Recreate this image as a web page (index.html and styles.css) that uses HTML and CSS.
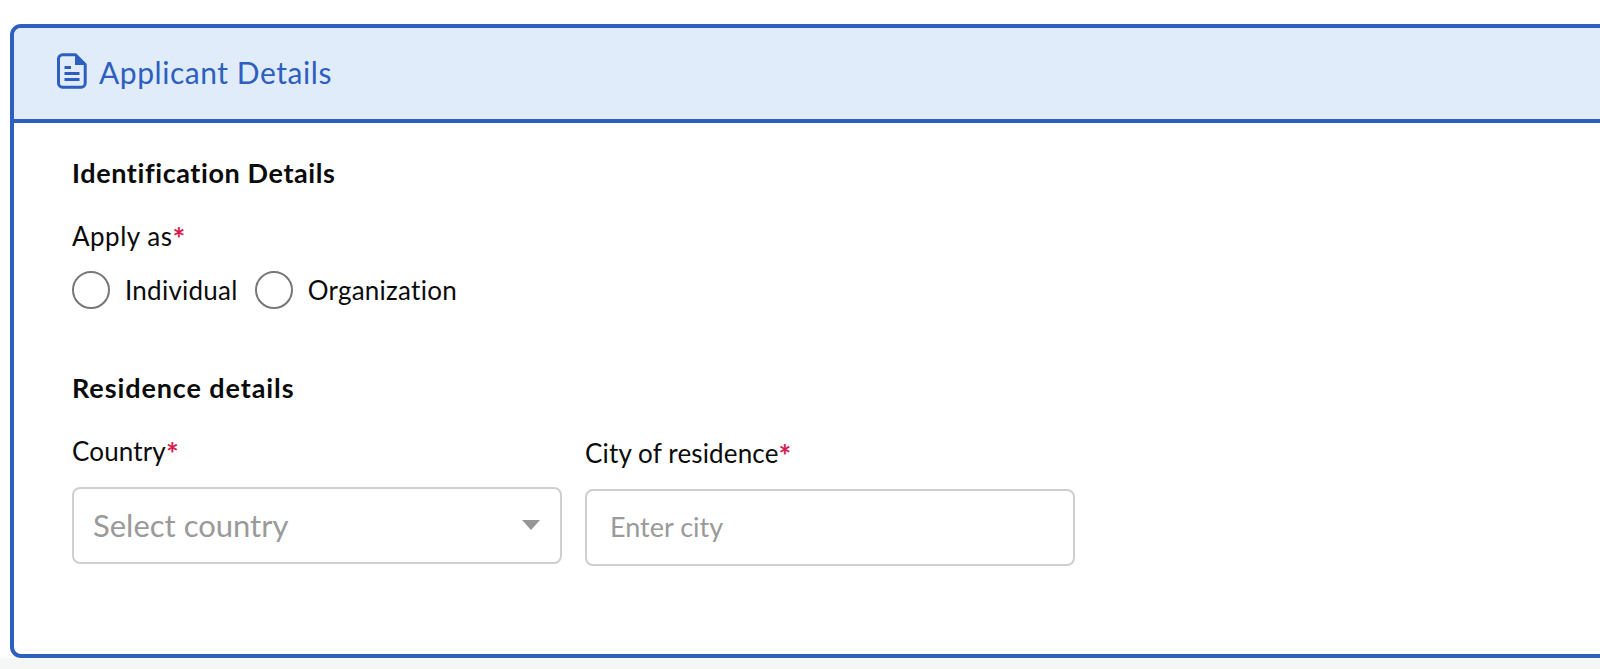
FILE: index.html
```html
<!DOCTYPE html>
<html lang="en">
<head>
<meta charset="utf-8">
<title>Applicant Details</title>
<link rel="stylesheet" href="styles.css">
</head>
<body>
<section class="card">
  <header class="card-head">
    <svg class="doc-icon" viewBox="0 0 30 36" width="30" height="36" aria-hidden="true">
      <path d="M5.5 1.8H18.5L28.2 11.5V30.2a4 4 0 0 1-4 4H5.5a4 4 0 0 1-4-4V5.8a4 4 0 0 1 4-4Z" fill="none" stroke="currentColor" stroke-width="3" stroke-linejoin="round"/>
      <path d="M18 2V12H28Z" fill="currentColor"/>
      <path d="M7.5 14.5H14M7.5 20.5H22.5M7.5 26.5H22.5" fill="none" stroke="currentColor" stroke-width="2.8"/>
    </svg>
    <h1 class="card-title">Applicant Details</h1>
  </header>
  <div class="card-body">
    <h2 class="section-title">Identification Details</h2>
    <p class="label apply-label">Apply as<span class="req">*</span></p>
    <div class="radio-row">
      <label class="radio"><span class="radio-dot"></span>Individual</label>
      <label class="radio"><span class="radio-dot"></span>Organization</label>
    </div>
    <h2 class="section-title residence">Residence details</h2>
    <div class="fields">
      <div class="field">
        <p class="label">Country<span class="req">*</span></p>
        <div class="select">
          <span>Select country</span>
          <span class="caret"></span>
        </div>
      </div>
      <div class="field field-city">
        <p class="label">City of residence<span class="req">*</span></p>
        <input class="text-input" type="text" placeholder="Enter city">
      </div>
    </div>
  </div>
</section>
</body>
</html>
```
FILE: styles.css
```css
* { box-sizing: border-box; }
html, body { margin: 0; height: 669px; overflow: hidden; }
body {
  background: linear-gradient(#fff 0, #fff 655px, #f5f7f7 660px);
  padding: 24px 0 0 10px;
  font-family: "Lato", "Open Sans", sans-serif;
  font-variant-ligatures: none;
  color: #0b0b0b;
}
.card {
  width: 1640px;
  height: 634px;
  background: #fff;
  border: 4px solid #2d5fbe;
  border-radius: 11px;
  overflow: hidden;
}
.card-head {
  height: 95px;
  background: #e0ecf9;
  border-bottom: 4px solid #2d5fbe;
  display: flex;
  align-items: center;
  padding: 0 0 3px 43px;
  color: #2d5fbe;
  gap: 12px;
}
.doc-icon { flex: none; margin-top: -2px; }
.card-title { margin: 0; font-size: 30px; font-weight: 400; letter-spacing: .55px; }
.card-body { padding: 34px 0 0 58px; }
.section-title { margin: 0; font-size: 27px; line-height: 32px; font-weight: 700; letter-spacing: .6px; }
.label { margin: 0; font-size: 26px; line-height: 32px; font-weight: 400; letter-spacing: .15px; }
.req { color: #d81b4f; font-size: 30px; font-weight: 700; line-height: 0; vertical-align: -4px; }
.apply-label { margin-top: 31px; letter-spacing: .5px; }
.radio-row { display: flex; gap: 17px; margin-top: 19px; }
.radio { display: flex; align-items: center; gap: 15px; font-size: 26px; line-height: 38px; letter-spacing: .25px; }
.radio-dot { width: 38px; height: 38px; border: 2px solid #777; border-radius: 50%; background: #fff; }
.residence { margin-top: 63px; letter-spacing: .9px; }
.fields { display: flex; gap: 23px; margin-top: 31px; }
.field { width: 490px; }
.field-city { margin-top: 2px; }
.select, .text-input {
  margin-top: 20px;
  width: 100%;
  height: 77px;
  border: 2px solid #cfcfcf;
  border-radius: 8px;
  background: #fff;
  font-family: inherit;
}
.select {
  display: flex;
  align-items: center;
  justify-content: space-between;
  padding: 0 20px 2px 19px;
  font-size: 31px;
  color: #9a9a9a;
}
.caret {
  width: 0;
  height: 0;
  border-left: 9px solid transparent;
  border-right: 9px solid transparent;
  border-top: 10px solid #969696;
}
.text-input { display: block; padding: 0 22px 2px 23px; font-size: 27px; color: #333; outline: none; }
.text-input::placeholder { color: #9a9a9a; opacity: 1; }
```
